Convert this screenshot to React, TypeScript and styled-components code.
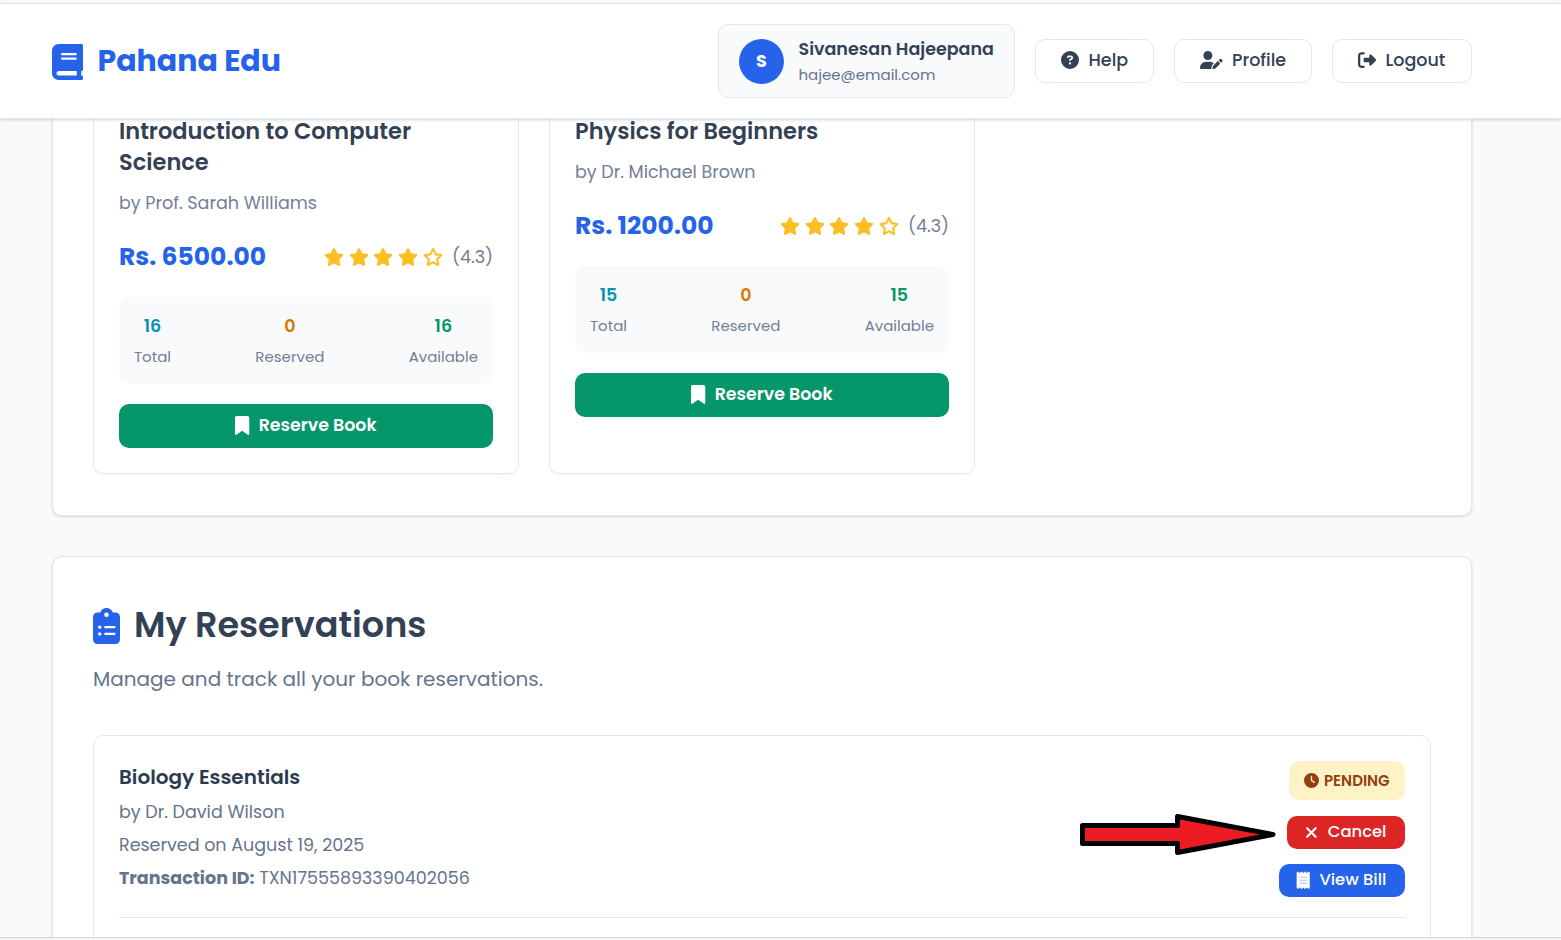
import React from "react";
import styled, { createGlobalStyle } from "styled-components";
import {
  FaBook,
  FaBookmark,
  FaCircleQuestion,
  FaClipboardList,
  FaClock,
  FaReceipt,
  FaRegStar,
  FaRightFromBracket,
  FaStar,
  FaUserPen,
  FaXmark,
} from "react-icons/fa6";

const color = {
  primary: "#2563eb",
  text: "#334155",
  muted: "#718096",
  slate: "#64748b",
  border: "#e2e8f0",
  soft: "#f8fafc",
  success: "#059669",
  danger: "#dc2626",
  info: "#0891b2",
  warning: "#d97706",
  star: "#fbbf24",
};

const GlobalStyle = createGlobalStyle`
  *, *::before, *::after { box-sizing: border-box; }
  body {
    margin: 0;
    background: #f9fafc;
    color: ${color.text};
    font-family: Poppins, Inter, "Liberation Sans", sans-serif;
  }
  svg { display: block; flex: none; }
`;

const Page = styled.div`
  position: relative;
  display: flex;
  flex-direction: column;
  height: 940px;
  overflow: hidden;
`;

const TopEdge = styled.div`
  flex: none;
  height: 4px;
  background: #f7f7f7;
  border-bottom: 1px solid #e8e8e8;
`;

const BottomEdge = styled.div`
  flex: none;
  height: 3px;
  background: #f3f4f4;
  border-top: 1px solid #d5d8db;
`;

/* ---------- header ---------- */

const Header = styled.header`
  position: relative;
  z-index: 2;
  flex: none;
  display: flex;
  align-items: center;
  justify-content: space-between;
  height: 115px;
  padding: 0 89px 0 51.5px;
  background: #fff;
  border-bottom: 1px solid ${color.border};
  box-shadow: 0 1px 3px rgba(0, 0, 0, 0.16);
`;

const Brand = styled.div`
  display: flex;
  align-items: center;
  gap: 14.5px;
  color: ${color.primary};
  font-size: 30px;
  font-weight: 700;
  line-height: 40px;
`;

const BrandIcon = styled(FaBook)`
  width: 31.5px;
  height: 36px;
  margin-top: 2px;
`;

const HeaderActions = styled.div`
  display: flex;
  align-items: center;
  gap: 20px;
`;

const UserCard = styled.div`
  display: flex;
  align-items: center;
  gap: 14.5px;
  width: 297px;
  height: 74px;
  padding: 0 20px;
  background: ${color.soft};
  border: 1px solid ${color.border};
  border-radius: 10px;
  white-space: nowrap;
`;

const Avatar = styled.div`
  flex: none;
  display: grid;
  place-items: center;
  width: 45px;
  height: 45px;
  border-radius: 50%;
  background: ${color.primary};
  color: #fff;
  font-size: 17.5px;
  font-weight: 700;
`;

const UserText = styled.div`
  display: flex;
  flex-direction: column;
`;

const UserName = styled.span`
  font-size: 17.5px;
  font-weight: 600;
  line-height: 27px;
`;

const UserEmail = styled.span`
  color: ${color.slate};
  font-size: 15px;
  line-height: 24px;
`;

const NavButton = styled.button<{ $w: number }>`
  display: flex;
  align-items: center;
  gap: 9.5px;
  width: ${(p) => p.$w}px;
  height: 44px;
  padding: 0 0 2px 25px;
  background: #fff;
  border: 1px solid ${color.border};
  border-radius: 10px;
  color: ${color.text};
  font: inherit;
  font-size: 17.5px;
  font-weight: 500;
`;

const ProfileIcon = styled(FaUserPen)`
  width: 22.5px;
  height: 18px;
`;

/* ---------- sections ---------- */

const Main = styled.main`
  flex: 1;
  min-height: 0;
  overflow: hidden;
  padding: 0 89px 0 52px;
`;

const Panel = styled.section`
  background: #fff;
  border: 1px solid ${color.border};
  border-radius: 10px;
  box-shadow: 0 1px 3px rgba(0, 0, 0, 0.15);
  padding: 40px;
`;

/* The catalogue is scrolled so that its upper part is under the header */
const CataloguePanel = styled(Panel)`
  margin-top: -67px;
  margin-bottom: 40px;
  padding-bottom: 41px;
`;

const BookGrid = styled.div`
  display: grid;
  grid-template-columns: repeat(3, 426px);
  gap: 30px;
`;

const BookCard = styled.article`
  padding: 25px;
  border: 1px solid ${color.border};
  border-radius: 10px;
  box-shadow: 0 1px 2px rgba(0, 0, 0, 0.04);
`;

const BookTitle = styled.h3`
  display: flex;
  flex-direction: column;
  gap: 7px;
  margin: 0 0 14px;
  font-size: 22.5px;
  font-weight: 600;
  line-height: 24px;
`;

const Author = styled.p`
  margin: 0;
  color: ${color.muted};
  font-size: 17.5px;
  line-height: 30px;
`;

const PriceRow = styled.div`
  display: flex;
  align-items: center;
  justify-content: space-between;
  height: 40px;
  margin: 18.5px 0 20.5px;
`;

const Price = styled.span`
  color: ${color.primary};
  font-size: 25px;
  font-weight: 700;
`;

const Rating = styled.div`
  display: flex;
  align-items: center;
  gap: 4.7px;
  color: ${color.star};
  font-size: 20px;
`;

const EmptyStar = styled(FaRegStar)`
  stroke: currentColor;
  stroke-width: 14px;
`;

const Score = styled.span`
  margin-left: 4.5px;
  color: ${color.muted};
  font-size: 17.6px;
`;

const Stats = styled.div`
  display: flex;
  justify-content: space-between;
  height: 86.5px;
  margin-bottom: 20.5px;
  padding: 12.6px 15px;
  background: ${color.soft};
  border-radius: 10px;
`;

const Stat = styled.div`
  display: flex;
  flex-direction: column;
  align-items: center;
`;

const StatValue = styled.span<{ $color: string }>`
  color: ${(p) => p.$color};
  font-size: 17.5px;
  font-weight: 600;
  line-height: 32px;
`;

const StatLabel = styled.span`
  color: ${color.muted};
  font-size: 15px;
  line-height: 30px;
`;

const ReserveButton = styled.button`
  display: flex;
  align-items: center;
  justify-content: center;
  gap: 9px;
  width: 100%;
  height: 44px;
  padding: 0 0 2px;
  border: 0;
  border-radius: 10px;
  background: ${color.success};
  color: #fff;
  font: inherit;
  font-size: 17.4px;
  font-weight: 600;
`;

const ReserveIcon = styled(FaBookmark)`
  width: 14.25px;
  height: 19px;
`;

const SectionTitle = styled.h2`
  display: flex;
  align-items: center;
  gap: 14px;
  margin: 0;
  height: 55px;
  font-size: 35px;
  font-weight: 600;
`;

const SectionIcon = styled(FaClipboardList)`
  width: 27px;
  height: 36px;
  margin-top: 3px;
  color: ${color.primary};
`;

const Subtitle = styled.p`
  margin: 10px 0 39px;
  color: ${color.slate};
  font-size: 20px;
  line-height: 34px;
`;

const ReservationCard = styled.article`
  height: 320px;
  padding: 25px;
  border: 1px solid ${color.border};
  border-radius: 10px;
`;

const ReservationTop = styled.div`
  display: flex;
  justify-content: space-between;
  height: 157px;
  border-bottom: 1px solid ${color.border};
`;

const ReservationTitle = styled.h4`
  margin: 0 0 3px;
  color: #2b3a4f;
  font-size: 20px;
  font-weight: 600;
  line-height: 32px;
`;

const Detail = styled.p`
  margin: 0;
  color: ${color.slate};
  font-size: 17.5px;
  line-height: 33px;
`;

const ReservationActions = styled.div`
  display: flex;
  flex-direction: column;
  align-items: flex-end;
`;

const StatusBadge = styled.div`
  display: flex;
  align-items: center;
  gap: 5px;
  width: 116px;
  height: 39px;
  margin-bottom: 16px;
  padding-left: 15px;
  border-radius: 10px;
  background: #fef3c7;
  color: #92400e;
  font-size: 15px;
  font-weight: 600;
`;

const ActionButton = styled.button<{ $bg: string; $w: number }>`
  display: flex;
  align-items: center;
  gap: 10px;
  width: ${(p) => p.$w}px;
  height: 33px;
  margin-bottom: 15px;
  padding: 0 0 2px 18px;
  border: 0;
  border-radius: 10px;
  background: ${(p) => p.$bg};
  color: #fff;
  font: inherit;
  font-size: 16.4px;
  font-weight: 500;
  white-space: nowrap;
`;

const CancelIcon = styled(FaXmark)`
  width: 12.75px;
  height: 17px;
  margin-top: 2px;
`;

/* Stroked so that the printed lines stay faint at this size */
const BillIcon = styled(FaReceipt)`
  width: 12.4px;
  height: 16.5px;
  margin-top: 1px;
  overflow: visible;
  stroke: currentColor;
  stroke-width: 22px;
`;

/* Callout arrow lying over the reservation card, pointing at Cancel */
const PointerArrow = styled.svg`
  position: absolute;
  left: 1080px;
  top: 813px;
  z-index: 3;
`;

type Book = {
  title: string[];
  author: string;
  price: string;
  total: number;
  reserved: number;
  available: number;
};

const books: Book[] = [
  {
    title: ["Introduction to Computer", "Science"],
    author: "by Prof. Sarah Williams",
    price: "Rs. 6500.00",
    total: 16,
    reserved: 0,
    available: 16,
  },
  {
    title: ["Physics for Beginners"],
    author: "by Dr. Michael Brown",
    price: "Rs. 1200.00",
    total: 15,
    reserved: 0,
    available: 15,
  },
];

function BookItem({ book }: { book: Book }) {
  return (
    <BookCard>
      <BookTitle>
        {book.title.map((line) => (
          <span key={line}>{line}</span>
        ))}
      </BookTitle>
      <Author>{book.author}</Author>
      <PriceRow>
        <Price>{book.price}</Price>
        <Rating>
          <FaStar />
          <FaStar />
          <FaStar />
          <FaStar />
          <EmptyStar />
          <Score>(4.3)</Score>
        </Rating>
      </PriceRow>
      <Stats>
        <Stat>
          <StatValue $color={color.info}>{book.total}</StatValue>
          <StatLabel>Total</StatLabel>
        </Stat>
        <Stat>
          <StatValue $color={color.warning}>{book.reserved}</StatValue>
          <StatLabel>Reserved</StatLabel>
        </Stat>
        <Stat>
          <StatValue $color={color.success}>{book.available}</StatValue>
          <StatLabel>Available</StatLabel>
        </Stat>
      </Stats>
      <ReserveButton>
        <ReserveIcon />
        Reserve Book
      </ReserveButton>
    </BookCard>
  );
}

export default function App() {
  return (
    <Page>
      <GlobalStyle />
      <TopEdge />
      <Header>
        <Brand>
          <BrandIcon />
          Pahana Edu
        </Brand>
        <HeaderActions>
          <UserCard>
            <Avatar>S</Avatar>
            <UserText>
              <UserName>Sivanesan Hajeepana</UserName>
              <UserEmail>hajee@email.com</UserEmail>
            </UserText>
          </UserCard>
          <NavButton $w={119}>
            <FaCircleQuestion size={18} />
            Help
          </NavButton>
          <NavButton $w={138}>
            <ProfileIcon />
            Profile
          </NavButton>
          <NavButton $w={140}>
            <FaRightFromBracket size={18} />
            Logout
          </NavButton>
        </HeaderActions>
      </Header>

      <Main>
        <CataloguePanel>
          <BookGrid>
            {books.map((b) => (
              <BookItem key={b.author} book={b} />
            ))}
          </BookGrid>
        </CataloguePanel>

        <Panel>
          <SectionTitle>
            <SectionIcon />
            My Reservations
          </SectionTitle>
          <Subtitle>Manage and track all your book reservations.</Subtitle>
          <ReservationCard>
            <ReservationTop>
              <div>
                <ReservationTitle>Biology Essentials</ReservationTitle>
                <Detail>by Dr. David Wilson</Detail>
                <Detail>Reserved on August 19, 2025</Detail>
                <Detail>
                  <strong>Transaction ID:</strong> TXN17555893390402056
                </Detail>
              </div>
              <ReservationActions>
                <StatusBadge>
                  <FaClock size={15} />
                  PENDING
                </StatusBadge>
                <ActionButton $bg={color.danger} $w={118}>
                  <CancelIcon />
                  Cancel
                </ActionButton>
                <ActionButton $bg={color.primary} $w={126}>
                  <BillIcon />
                  View Bill
                </ActionButton>
              </ReservationActions>
            </ReservationTop>
          </ReservationCard>
        </Panel>
      </Main>
      <BottomEdge />

      <PointerArrow width="196" height="43" viewBox="0 0 196 43" aria-hidden="true">
        <path
          d="M2.5 12.5H97.5V3.5L193 21.5L97.5 39.5V30.5H2.5Z"
          fill="#ed1c24"
          stroke="#000"
          strokeWidth="5"
          strokeLinejoin="round"
        />
      </PointerArrow>
    </Page>
  );
}
